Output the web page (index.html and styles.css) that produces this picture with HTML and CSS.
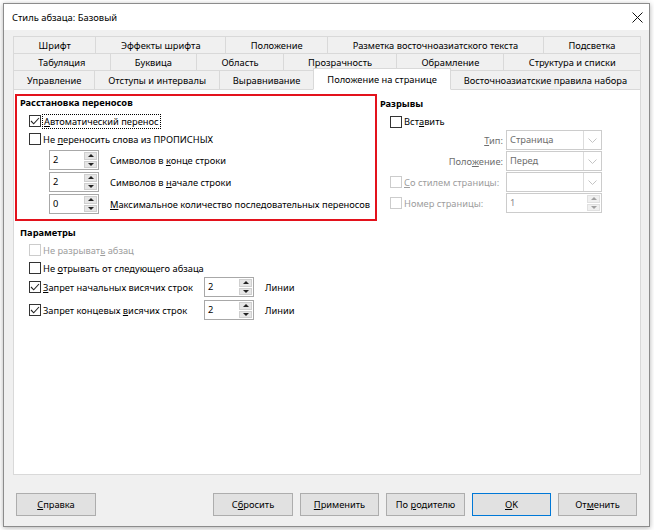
FILE: index.html
```html
<!DOCTYPE html>
<html lang="ru">
<head>
    <meta charset="UTF-8">
    <meta name="viewport" content="width=device-width, initial-scale=1.0">
    <title>Стиль абзаца: Базовый</title>
    <link rel="stylesheet" href="styles.css">
</head>
<body>

<div class="window">
    <div class="titlebar">
        <span class="title">Стиль абзаца: Базовый</span>
        <svg class="close" width="11" height="11" viewBox="0 0 11 11">
            <path d="M0.5 0.5L10.5 10.5M10.5 0.5L0.5 10.5" stroke="#111" stroke-width="1" fill="none"/>
        </svg>
    </div>

    <div class="dialog">
        <div class="tabs">
            <div class="tab-row">
                <div class="tab">Шрифт</div>
                <div class="tab">Эффекты шрифта</div>
                <div class="tab">Положение</div>
                <div class="tab">Разметка восточноазиатского текста</div>
                <div class="tab">Подсветка</div>
            </div>
            <div class="tab-row">
                <div class="tab">Табуляция</div>
                <div class="tab">Буквица</div>
                <div class="tab">Область</div>
                <div class="tab">Прозрачность</div>
                <div class="tab">Обрамление</div>
                <div class="tab">Структура и списки</div>
            </div>
            <div class="tab-row">
                <div class="tab">Управление</div>
                <div class="tab">Отступы и интервалы</div>
                <div class="tab">Выравнивание</div>
                <div class="tab active">Положение на странице</div>
                <div class="tab">Восточноазиатские правила набора</div>
            </div>
        </div>

        <div class="panel">
            <div class="top">
                <div class="hyphen">
                    <div class="group-title">Расстановка переносов</div>
                    <div class="check first">
                        <span class="box checked"></span>
                        <span class="focus"><u>А</u>втоматический перенос</span>
                    </div>
                    <div class="check">
                        <span class="box"></span>
                        <span>Не <u>п</u>ереносить слова из ПРОПИСНЫХ</span>
                    </div>
                    <div class="spin-row">
                        <div class="spin">
                            <span class="spin-val">2</span>
                            <span class="spin-btns"><span class="up"></span><span class="down"></span></span>
                        </div>
                        <span class="spin-label">Символов в <u>к</u>онце строки</span>
                    </div>
                    <div class="spin-row">
                        <div class="spin">
                            <span class="spin-val">2</span>
                            <span class="spin-btns"><span class="up"></span><span class="down"></span></span>
                        </div>
                        <span class="spin-label">Символов в <u>н</u>ачале строки</span>
                    </div>
                    <div class="spin-row">
                        <div class="spin">
                            <span class="spin-val">0</span>
                            <span class="spin-btns"><span class="up"></span><span class="down"></span></span>
                        </div>
                        <span class="spin-label"><u>М</u>аксимальное количество последовательных переносов</span>
                    </div>
                </div>

                <div class="breaks">
                    <div class="group-title">Разрывы</div>
                    <div class="check insert">
                        <span class="box"></span>
                        <span>Вст<u>а</u>вить</span>
                    </div>
                    <div class="break-grid">
                        <span class="field-label"><u>Т</u>ип:</span>
                        <div class="select">
                            <span class="select-val">Страница</span>
                            <span class="select-arrow"><svg width="9" height="5" viewBox="0 0 9 5"><path d="M0.5 0.5L4.5 4.5L8.5 0.5" stroke="#c4c4c4" fill="none"/></svg></span>
                        </div>
                        <span class="field-label">Поло<u>ж</u>ение:</span>
                        <div class="select">
                            <span class="select-val">Перед</span>
                            <span class="select-arrow"><svg width="9" height="5" viewBox="0 0 9 5"><path d="M0.5 0.5L4.5 4.5L8.5 0.5" stroke="#c4c4c4" fill="none"/></svg></span>
                        </div>
                        <div class="check disabled">
                            <span class="box"></span>
                            <span><u>С</u>о стилем страницы:</span>
                        </div>
                        <div class="select">
                            <span class="select-val"></span>
                            <span class="select-arrow"><svg width="9" height="5" viewBox="0 0 9 5"><path d="M0.5 0.5L4.5 4.5L8.5 0.5" stroke="#c4c4c4" fill="none"/></svg></span>
                        </div>
                        <div class="check disabled">
                            <span class="box"></span>
                            <span>Номер страницы:</span>
                        </div>
                        <div class="spin wide disabled">
                            <span class="spin-val">1</span>
                            <span class="spin-btns"><span class="up"></span><span class="down"></span></span>
                        </div>
                    </div>
                </div>
            </div>

            <div class="params">
                <div class="group-title">Параметры</div>
                <div class="check disabled">
                    <span class="box"></span>
                    <span>Не разрыват<u>ь</u> абзац</span>
                </div>
                <div class="check">
                    <span class="box"></span>
                    <span>Не <u>о</u>трывать от следующего абзаца</span>
                </div>
                <div class="param-row">
                    <div class="check">
                        <span class="box checked"></span>
                        <span><u>З</u>апрет начальных висячих строк</span>
                    </div>
                    <div class="spin">
                        <span class="spin-val">2</span>
                        <span class="spin-btns"><span class="up"></span><span class="down"></span></span>
                    </div>
                    <span class="spin-label">Линии</span>
                </div>
                <div class="param-row last">
                    <div class="check">
                        <span class="box checked"></span>
                        <span>Запрет концевых <u>в</u>исячих строк</span>
                    </div>
                    <div class="spin">
                        <span class="spin-val">2</span>
                        <span class="spin-btns"><span class="up"></span><span class="down"></span></span>
                    </div>
                    <span class="spin-label">Линии</span>
                </div>
            </div>
        </div>

        <div class="buttons">
            <button class="btn"><u>С</u>правка</button>
            <div class="btn-group">
                <button class="btn">С<u>б</u>росить</button>
                <button class="btn"><u>П</u>рименить</button>
                <button class="btn">По <u>р</u>одителю</button>
                <button class="btn default"><u>O</u>K</button>
                <button class="btn">От<u>м</u>енить</button>
            </div>
        </div>
    </div>
</div>

</body>
</html>
```

FILE: styles.css
```css
body {
    margin: 0;
    background-color: #fff;
    font-family: "Noto Sans", "DejaVu Sans", sans-serif;
    font-size: 9.3px;
    color: #000;
}
u {
    text-decoration: underline;
    text-underline-offset: 1px;
}
.window {
    margin: 3px;
    width: 647px;
    height: 524px;
    box-sizing: border-box;
    border: 1px solid #8c8c8c;
    background-color: #f0f0f0;
    box-shadow: 0 1px 5px rgba(0, 0, 0, 0.3);
    display: flex;
    flex-direction: column;
}
.titlebar {
    height: 26px;
    flex-shrink: 0;
    background-color: #fff;
    display: flex;
    align-items: center;
    justify-content: space-between;
    padding: 0 6px 0 8px;
}
.title {
    font-size: 9.4px;
}
.dialog {
    flex: 1;
    display: flex;
    flex-direction: column;
    padding: 6px 8px 0 9px;
}

/* tabs */
.tabs {
    display: flex;
    flex-direction: column;
}
.tab-row {
    display: flex;
    height: 18px;
}
.tab-row + .tab-row {
    margin-top: -1px;
}
.tab-row:last-child {
    height: 20px;
}
.tab {
    flex: 1 1 auto;
    box-sizing: border-box;
    border: 1px solid #d9d9d9;
    margin-left: -1px;
    padding: 0 6px;
    background-color: #f0f0f0;
    display: flex;
    align-items: center;
    justify-content: center;
    white-space: nowrap;
}
.tab:first-child {
    margin-left: 0;
}
.tab.active {
    position: relative;
    z-index: 1;
    margin-top: -2px;
    background-color: #fff;
    border-bottom-color: #fff;
}

/* page */
.panel {
    margin-top: -1px;
    height: 386px;
    box-sizing: border-box;
    border: 1px solid #d9d9d9;
    background-color: #fff;
    padding: 4px 0 0 1px;
}
.top {
    display: flex;
    align-items: flex-start;
}
.group-title {
    font-weight: bold;
    height: 14px;
    line-height: 14px;
}
.hyphen {
    width: 362px;
    height: 127px;
    box-sizing: border-box;
    border: 2px solid #e3121c;
    padding-left: 3px;
}
.check {
    display: flex;
    align-items: center;
    height: 18px;
    padding-left: 9px;
    white-space: nowrap;
}
.check.first {
    margin-top: 2px;
}
.box {
    width: 12px;
    height: 12px;
    box-sizing: border-box;
    border: 1px solid #333;
    background-color: #fff;
    margin-right: 2px;
    flex-shrink: 0;
}
.box.checked {
    background: #fff url("data:image/svg+xml,%3Csvg xmlns='http://www.w3.org/2000/svg' width='10' height='10'%3E%3Cpath d='M1 5L3.7 7.8L9 2' stroke='%23222' stroke-width='1.1' fill='none'/%3E%3C/svg%3E") center no-repeat;
}
.check.disabled {
    color: #9d9d9d;
}
.check.disabled .box {
    border-color: #cccccc;
}
.focus {
    outline: 1px dotted #000;
    padding: 0 1px;
}
.spin-row {
    display: flex;
    align-items: center;
    height: 20px;
    margin-top: 2px;
    padding-left: 29px;
}
.spin-label {
    margin-left: 11px;
    white-space: nowrap;
}

/* spin box */
.spin {
    width: 50px;
    height: 20px;
    box-sizing: border-box;
    border: 1px solid #a8a8a8;
    background-color: #fff;
    display: flex;
    flex-shrink: 0;
}
.spin-val {
    flex: 1;
    padding-left: 3px;
    line-height: 18px;
}
.spin-btns {
    width: 13px;
    display: flex;
    flex-direction: column;
    gap: 1px;
    padding: 1px;
}
.spin-btns span {
    flex: 1;
    background-color: #e6e6e6;
    border: 1px solid #cfcfcf;
    display: flex;
    align-items: center;
    justify-content: center;
}
.spin-btns .up::before,
.spin-btns .down::before {
    content: "";
    border-left: 3px solid transparent;
    border-right: 3px solid transparent;
}
.spin-btns .up::before {
    border-bottom: 3px solid #222;
}
.spin-btns .down::before {
    border-top: 3px solid #222;
}
.spin.wide {
    width: 96px;
}
.spin.disabled {
    border-color: #cccccc;
    color: #8a8a8a;
}
.spin.disabled .spin-btns span {
    background-color: #f0f0f0;
    border-color: #e0e0e0;
}
.spin.disabled .up::before {
    border-bottom-color: #a0a0a0;
}
.spin.disabled .down::before {
    border-top-color: #a0a0a0;
}

/* breaks */
.breaks {
    margin-left: 3px;
    padding-top: 3px;
}
.check.insert {
    height: 17px;
    margin-top: 2px;
    padding-left: 10px;
}
.break-grid {
    display: grid;
    grid-template-columns: 123px 96px;
    grid-auto-rows: 20px;
    column-gap: 3px;
    row-gap: 1px;
}
.field-label {
    align-self: center;
    text-align: right;
    color: #6d6d6d;
}
.break-grid .check {
    height: 20px;
    padding-left: 10px;
}
.select {
    box-sizing: border-box;
    border: 1px solid #cccccc;
    background-color: #fff;
    color: #6d6d6d;
    display: flex;
}
.select-val {
    flex: 1;
    padding-left: 3px;
    line-height: 18px;
}
.select-arrow {
    width: 17px;
    border-left: 1px solid #dcdcdc;
    display: flex;
    align-items: center;
    justify-content: center;
}

/* params */
.params {
    margin-top: 5px;
    padding-left: 5px;
}
.params .group-title {
    margin-bottom: 1px;
}
.param-row {
    display: flex;
    align-items: center;
    height: 20px;
}
.param-row.last {
    margin-top: 3px;
}
.param-row .check {
    width: 184px;
    box-sizing: border-box;
}

/* buttons */
.buttons {
    display: flex;
    justify-content: space-between;
    margin: 18px 4px 0 3px;
}
.btn-group {
    display: flex;
    gap: 7px;
}
.btn {
    width: 79px;
    height: 23px;
    box-sizing: border-box;
    border: 1px solid #adadad;
    background-color: #e1e1e1;
    font-family: inherit;
    font-size: 9.3px;
    color: #000;
    padding: 0;
}
.btn:first-child {
    width: 80px;
}
.btn.default {
    border-color: #0078d7;
}
```
